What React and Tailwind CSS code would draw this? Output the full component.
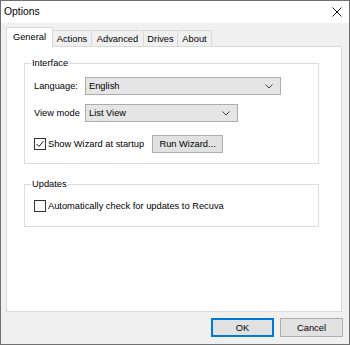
import React from "react";

const font = { fontFamily: '"Liberation Sans", Arial, sans-serif' };

function Chevron() {
  return (
    <svg width="8" height="5" viewBox="0 0 8 5" className="shrink-0">
      <polyline points="0.5,0.5 4,4 7.5,0.5" fill="none" stroke="#444" strokeWidth="1" />
    </svg>
  );
}

function Select({ value, width }) {
  return (
    <div className={`h-[18px] ${width} bg-[#e5e5e5] border border-[#acacac] flex items-center justify-between pl-[3px] pr-[7px]`}>
      <span>{value}</span>
      <Chevron />
    </div>
  );
}

function Checkbox({ checked }) {
  return (
    <div className="w-[12px] h-[12px] border border-[#333] bg-white flex items-center justify-center shrink-0">
      {checked && (
        <svg width="10" height="10" viewBox="0 0 10 10">
          <polyline points="1.5,5 4,7.5 8.5,2" fill="none" stroke="#222" strokeWidth="1" />
        </svg>
      )}
    </div>
  );
}

function Tab({ label, w, selected }) {
  if (selected) {
    return (
      <div className={`relative z-10 ${w} h-[20px] bg-white border-l border-t border-r border-[#d9d9d9] flex items-center justify-center pb-[1px]`}>
        {label}
      </div>
    );
  }
  return (
    <div className={`${w} h-[17px] bg-[#f0f0f0] border-t border-r border-[#d9d9d9] flex items-center justify-center`}>
      {label}
    </div>
  );
}

export default function App() {
  return (
    <div className="w-[350px] h-[345px] border border-[#707070] bg-[#f0f0f0] flex flex-col text-black text-[9.3px] leading-[12px]" style={font}>
      <div className="h-[22px] bg-white flex items-center justify-between pl-[3px] pr-[7px] shrink-0">
        <span className="text-[10.4px]">Options</span>
        <svg width="10" height="10" viewBox="0 0 10 10">
          <path d="M0.5 0.5 L9.5 9.5 M9.5 0.5 L0.5 9.5" stroke="#111" strokeWidth="1" fill="none" />
        </svg>
      </div>
      <div className="pl-[5px] pr-[7px] pt-[4px] flex flex-col">
        <div className="flex items-end h-[20px]">
          <Tab label="General" w="w-[47px]" selected />
          <Tab label="Actions" w="w-[39px]" />
          <Tab label="Advanced" w="w-[52px]" />
          <Tab label="Drives" w="w-[34px]" />
          <Tab label="About" w="w-[34px]" />
        </div>
        <div className="-mt-px h-[266px] bg-white border border-[#d9d9d9] pl-[17px] pr-[22px] pt-[10px]">
          <fieldset className="border border-[#dcdcdc] w-[295px]">
            <legend className="ml-[6px] px-[1px] leading-[12px]">Interface</legend>
            <div className="pl-[9px] pt-[8px] pb-[10px] flex flex-col">
              <div className="flex items-center h-[18px]">
                <span className="w-[51px]">Language:</span>
                <Select value="English" width="w-[196px]" />
              </div>
              <div className="flex items-center h-[18px] mt-[9px]">
                <span className="w-[51px]">View mode</span>
                <Select value="List View" width="w-[153px]" />
              </div>
              <div className="flex items-center h-[18px] mt-[13px]">
                <Checkbox checked />
                <span className="ml-[2px]">Show Wizard at startup</span>
                <div className="ml-[8px] w-[71px] h-[18px] bg-[#e1e1e1] border border-[#adadad] flex items-center justify-center">
                  Run Wizard...
                </div>
              </div>
            </div>
          </fieldset>
          <fieldset className="border border-[#dcdcdc] w-[295px] mt-[14px]">
            <legend className="ml-[6px] px-[1px] leading-[12px]">Updates</legend>
            <div className="pl-[9px] pt-[7px] pb-[11px]">
              <div className="flex items-center h-[18px]">
                <Checkbox />
                <span className="ml-[2px]">Automatically check for updates to Recuva</span>
              </div>
            </div>
          </fieldset>
        </div>
        <div className="flex justify-end gap-[6px] mt-[6px] -mr-px">
          <div className="w-[63px] h-[19px] bg-[#e1e1e1] border-2 border-[#0078d7] flex items-center justify-center">OK</div>
          <div className="w-[63px] h-[19px] bg-[#e1e1e1] border border-[#adadad] flex items-center justify-center">Cancel</div>
        </div>
      </div>
    </div>
  );
}
